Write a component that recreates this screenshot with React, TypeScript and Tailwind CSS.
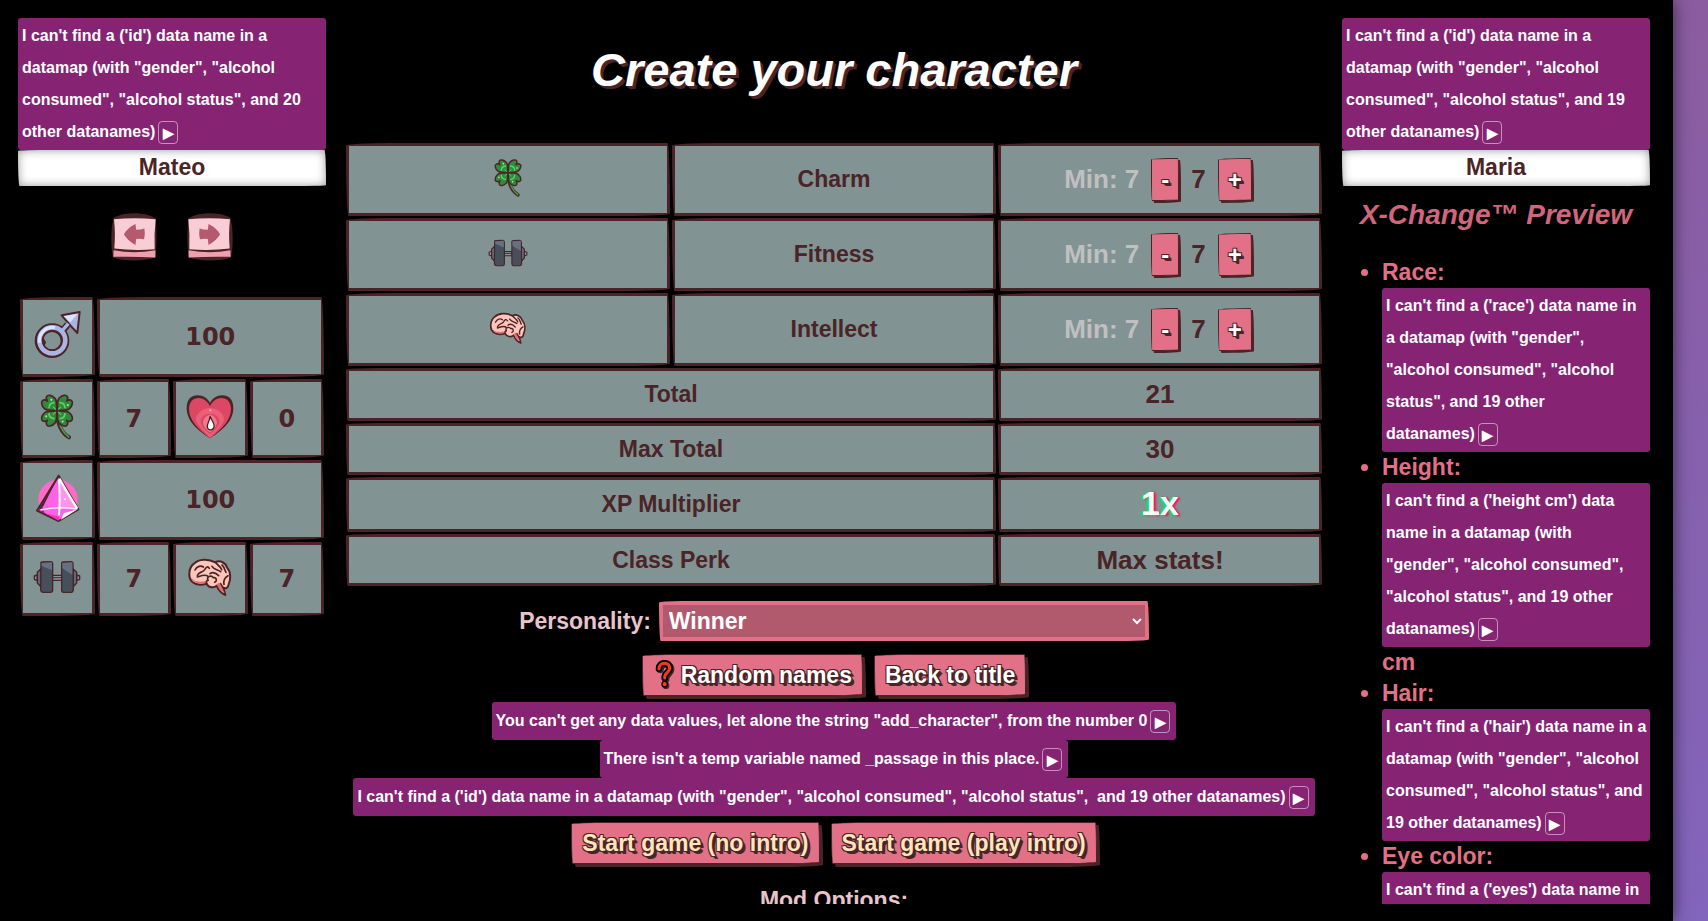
import React, { useState } from "react";

type StatName = "Charm" | "Fitness" | "Intellect";

const MIN_STAT = 7;
const MAX_TOTAL = 30;

// Uneven radii give the hand-drawn look of the frames
const cellStyle =
  "border-[3px] border-[#4a2426] bg-[#829394] p-0 text-center align-middle rounded-[70px_4px_70px_4px/4px_110px_4px_110px]";

const buttonStyle =
  "border border-[#4a2426] bg-[#e27086] font-bold [text-shadow:-1px_-1px_0_#4a2426,1px_-1px_0_#4a2426,-1px_1px_0_#4a2426,1px_1px_0_#4a2426,2px_2px_0_#4a2426,3px_3px_0_#4a2426] rounded-[70px_3px_70px_3px/4px_70px_4px_70px]";

const wideButtonStyle = `${buttonStyle} h-[42px] px-[10px] shadow-[3px_3px_0_#4a2426]`;

const stepButtonStyle = `${buttonStyle} h-[43px] text-2xl leading-none text-white shadow-[2px_2px_0_#4a2426]`;

interface IconProps {
  className?: string;
}

function MaleIcon({ className }: IconProps) {
  return (
    <svg viewBox="0 0 144 144" className={className} aria-hidden="true">
      <path d="M84 65 104 41" stroke="#4a2426" strokeWidth="20" />
      <path d="M86 13 140 3 133 66 118 50 104 34Z" fill="#a9b5e4" stroke="#4a2426" strokeWidth="6" strokeLinejoin="round" />
      <circle cx="57" cy="89" r="39" fill="none" stroke="#4a2426" strokeWidth="26" />
      <circle cx="58" cy="88" r="39" fill="none" stroke="#a9b5e4" strokeWidth="14" />
      <path d="M20 95A39 39 0 0 1 66 50" fill="none" stroke="#dde3fa" strokeWidth="9" />
      <path d="M83 64 106 38" stroke="#a9b5e4" strokeWidth="10" />
      <path d="M92 16 134 8 112 34Z" fill="#dde3fa" />
      <path d="M30 78 27 95 34 108 39 94Z" fill="#4a2426" />
    </svg>
  );
}

function CloverIcon({ className }: IconProps) {
  return (
    <svg viewBox="0 0 144 144" className={className} aria-hidden="true">
      <path d="M72 58C74 90 82 118 108 133" fill="none" stroke="#4a2426" strokeWidth="12" strokeLinecap="round" />
      <path d="M73 58C76 92 86 116 107 132" fill="none" stroke="#43a047" strokeWidth="5" strokeLinecap="round" />
      {[45, 135, 225, 315].map((angle) => (
        <g key={angle} transform={`translate(72 53) rotate(${angle})`}>
          <path
            d="M0 0C-5-10-22-18-22-32C-23-44-14-54-9-52C-4-51-1-47 0-41C1-47 4-51 9-52C14-54 23-44 22-32C22-18 5-10 0 0Z"
            fill="#2f8a3c"
            stroke="#4a2426"
            strokeWidth="5"
            strokeLinejoin="round"
          />
          <path d="M-12-22Q0-34 12-22" fill="none" stroke="#5fd068" strokeWidth="5" />
          <path d="M0-5V-17" stroke="#5fd068" strokeWidth="3" />
          <circle cx="11" cy="-35" r="3" fill="#a4efa4" />
        </g>
      ))}
    </svg>
  );
}

function HeartIcon({ className }: IconProps) {
  return (
    <svg viewBox="0 0 144 144" className={className} aria-hidden="true">
      <path
        d="M72 136C38 114 2 86 2 46C2 18 16 7 35 7C52 7 66 17 72 30C78 17 92 7 109 7C128 7 142 18 142 46C142 86 106 114 72 136Z"
        fill="#4a2426"
      />
      <path
        d="M72 136C42 112 9 84 9 49C9 26 22 15 38 15C54 15 67 28 72 40C77 28 90 15 106 15C122 15 135 26 135 49C135 84 102 112 72 136Z"
        fill="#dc4864"
      />
      <path d="M72 44C48 48 29 62 30 80C31 92 50 112 72 133C94 112 113 92 114 80C115 62 96 48 72 44Z" fill="#ec5f78" />
      <path d="M72 62C56 62 44 72 44 84C44 98 56 110 72 124C88 110 100 98 100 84C100 72 88 62 72 62Z" fill="#dc4864" />
      <path d="M72 66C60 68 51 78 51 90C53 102 62 111 72 118C82 111 91 102 93 90C93 78 84 68 72 66Z" fill="#f2788c" />
      <path d="M72 70C76 82 87 90 84 103C80 114 66 113 64 102C62 92 72 86 72 70Z" fill="#fff" stroke="#4a2426" strokeWidth="4" />
      <circle cx="73" cy="52" r="3" fill="#ffb3bf" />
    </svg>
  );
}

function CrystalIcon({ className }: IconProps) {
  return (
    <svg viewBox="0 0 144 144" className={className} aria-hidden="true">
      <circle cx="75" cy="76" r="59" fill="#ff69c8" />
      <path d="M77 5 12 110 77 141 136 106Z" fill="#fb62e6" stroke="#4a2426" strokeWidth="6" strokeLinejoin="round" />
      <path d="M75 10 16 109 28 102Z" fill="#4a2426" />
      <path d="M15 109 28 102 36 119Z" fill="#b5108c" />
      <path d="M78 16 80 104 128 103Z" fill="#ff93ee" />
      <path d="M36 118 79 128 77 140Z" fill="#ff2fb8" />
      <path d="M22 108Q76 96 133 105" fill="none" stroke="#ffe6fb" strokeWidth="5" />
      <path d="M78 18Q82 76 78 124" fill="none" stroke="#fff" strokeWidth="6" />
      <path d="M79 14Q112 72 133 104" fill="none" stroke="#fff" strokeWidth="7" />
      <path d="M92 118 134 106 84 137Z" fill="#fff" />
      <circle cx="96" cy="76" r="3" fill="#fff" />
    </svg>
  );
}

function DumbbellIcon({ className }: IconProps) {
  return (
    <svg viewBox="0 0 144 144" className={className} aria-hidden="true">
      <g stroke="#4a2426" strokeWidth="4" strokeLinejoin="round">
        <rect x="58" y="67" width="28" height="15" fill="#8c93a5" />
        <path d="M58 74H86" strokeWidth="3" />
        <path d="M13 66 4 69V79L13 83ZM131 66 140 69V79L131 83Z" fill="#8c93a5" />
        <path d="M24 47 13 58V90L24 102ZM120 47 131 58V90L120 102Z" fill="#5d687c" />
        <path d="M24 31Q22 28 28 27L53 26Q59 26 59 33V111Q59 118 52 118H31Q24 118 23 111Z" fill="#474f5a" />
        <path d="M86 31Q86 27 91 27L114 26Q120 26 120 33L121 111Q120 118 114 118H92Q86 118 86 111Z" fill="#474f5a" />
      </g>
      <path d="M26 30 57 28V52L26 39ZM88 30 118 28V65L88 46Z" fill="#667083" />
    </svg>
  );
}

function BrainIcon({ className }: IconProps) {
  return (
    <svg viewBox="0 0 144 144" className={className} aria-hidden="true">
      <path
        d="M20 88C4 74 8 44 24 32C38 18 66 16 88 28C102 20 120 30 123 44C136 58 134 80 128 94C126 106 118 108 112 104L118 126C102 120 96 108 92 98C84 106 66 104 62 92C48 96 30 96 20 88Z"
        fill="#ffc4ba"
        stroke="#4a2426"
        strokeWidth="6"
        strokeLinejoin="round"
      />
      <path d="M12 60C13 80 27 91 62 84L65 94C84 106 92 92 100 89L116 121C100 114 98 104 92 94C84 101 70 101 63 90C40 94 13 92 12 60Z" fill="#e96a6c" />
      <g fill="none" stroke="#4a2426" strokeWidth="5" strokeLinecap="round">
        <path d="M27 51C32 39 46 37 52 42" />
        <path d="M34 68C38 55 50 60 56 50C61 41 66 39 70 46" />
        <path d="M34 72C46 68 58 62 66 70" />
        <path d="M78 40C84 50 96 50 104 56M88 28C94 36 104 40 107 50" />
        <path d="M72 62C82 54 92 62 98 68" />
        <path d="M66 82C60 70 76 66 82 74C92 72 94 84 86 88" />
        <path d="M126 68C116 74 112 84 114 94M108 36C116 42 116 52 120 58" />
        <path d="M104 92 112 106M62 92C60 86 62 82 66 82" />
      </g>
    </svg>
  );
}

function ArrowIcon({ className }: IconProps) {
  return (
    <svg viewBox="0 0 139 144" className={className} aria-hidden="true">
      <path d="M8 14C40-4 100-4 132 14C138 20 140 90 134 134C100 146 40 146 6 134C-2 100 0 40 8 14Z" fill="#4a2426" />
      <path d="M9 18Q70 12 135 18Q130 60 132 109Q70 114 10 107Q14 60 9 18Z" fill="#f9cdd5" />
      <path d="M8 112Q70 124 134 112V134Q70 130 7 132Z" fill="#f09fae" />
      <path d="M39 64Q50 44 74 33L76 50Q90 50 101 46Q104 62 100 79Q88 76 76 78L74 96Q50 84 39 64Z" fill="#b4596e" />
    </svg>
  );
}

function QuestionIcon({ className }: IconProps) {
  return (
    <svg viewBox="0 0 60 90" className={className} aria-hidden="true">
      <g fill="none" strokeLinecap="round" strokeLinejoin="round">
        <path d="M16 30C16 8 50 8 48 30C47 42 32 42 33 58M33 76V77" stroke="#4a2426" strokeWidth="20" />
        <path d="M12 26C12 4 46 4 44 26C43 38 28 38 29 54M29 72V73" stroke="#000" strokeWidth="20" />
        <path d="M12 26C12 4 46 4 44 26C43 38 28 38 29 54" stroke="#fb3a17" strokeWidth="9" />
        <path d="M29 72V73" stroke="#fb3a17" strokeWidth="12" />
      </g>
    </svg>
  );
}

function ErrorBox({ message, inline = false }: { message: string; inline?: boolean }) {
  // The last word stays on one line with the button
  const cut = message.lastIndexOf(" ") + 1;

  return (
    <div
      className={`rounded-[3px] bg-[#862373] text-left text-base font-bold leading-8 text-white ${
        inline ? "w-fit max-w-full py-[3px] pl-1 pr-[6px]" : "py-0.5 pl-1 pr-0.5"
      }`}
    >
      {message.slice(0, cut)}
      <span className="whitespace-nowrap">
        {message.slice(cut)}
        <button
          type="button"
          aria-label="Show details"
          className="ml-[3px] inline-flex h-[23px] w-5 items-center justify-center rounded border border-white/50 align-middle text-sm leading-none"
        >
          ▶
        </button>
      </span>
    </div>
  );
}

function NameInput({ label, defaultValue }: { label: string; defaultValue: string }) {
  return (
    <input
      type="text"
      aria-label={label}
      defaultValue={defaultValue}
      className="h-9 w-full bg-white pb-px text-center text-[23px] font-bold text-[#4a2426] outline-none rounded-[70px_3px_70px_3px/2px_70px_2px_70px] shadow-[inset_0_0_10px_rgba(0,0,0,0.4)]"
    />
  );
}

const statRows: { name: StatName; Icon: React.ComponentType<IconProps> }[] = [
  { name: "Charm", Icon: CloverIcon },
  { name: "Fitness", Icon: DumbbellIcon },
  { name: "Intellect", Icon: BrainIcon },
];

export default function App() {
  const [stats, setStats] = useState<Record<StatName, number>>({ Charm: 7, Fitness: 7, Intellect: 7 });
  const total = stats.Charm + stats.Fitness + stats.Intellect;

  const changeStat = (name: StatName, delta: number) => {
    if (stats[name] + delta < MIN_STAT || total + delta > MAX_TOTAL) return;
    setStats({ ...stats, [name]: stats[name] + delta });
  };

  const numberCell = `${cellStyle} text-2xl leading-none font-bold font-['DejaVu_Sans',sans-serif]`;
  const iconStyle = "mx-auto mb-1 block size-12";

  return (
    <div className="flex h-screen overflow-hidden bg-linear-to-b from-[#8b5c9f] to-[#8265bc] font-['Liberation_Sans',Arial,sans-serif]">
      <div className="mr-[35px] flex-1 bg-black pt-[18px] pr-[23px] pb-[17px] pl-[18px] shadow-[0_0_16px_rgba(0,0,0,0.6)]">
        <div className="grid h-full grid-cols-[11fr_35fr_11fr] gap-[18px] overflow-hidden">
          {/* Current character */}
          <aside>
            <ErrorBox message={`I can't find a ('id') data name in a datamap (with "gender", "alcohol consumed", "alcohol status", and 20 other datanames)`} />
            <NameInput label="Male name" defaultValue="Mateo" />

            <div className="mt-[27px] mb-[34px] flex justify-center gap-[30px]">
              <button type="button" aria-label="Previous">
                <ArrowIcon className="h-12 w-[46px]" />
              </button>
              <button type="button" aria-label="Next">
                <ArrowIcon className="h-12 w-[46px] -scale-x-100" />
              </button>
            </div>

            <table className="w-full table-fixed border-separate border-spacing-[2px] text-[#4a2426]">
              <tbody>
                <tr className="h-20">
                  <td className={cellStyle}><MaleIcon className={iconStyle} /></td>
                  <td className={numberCell} colSpan={3}>100</td>
                </tr>
                <tr className="h-[79px]">
                  <td className={cellStyle}><CloverIcon className={iconStyle} /></td>
                  <td className={numberCell}>{stats.Charm}</td>
                  <td className={cellStyle}><HeartIcon className={iconStyle} /></td>
                  <td className={numberCell}>0</td>
                </tr>
                <tr className="h-20">
                  <td className={cellStyle}><CrystalIcon className={iconStyle} /></td>
                  <td className={numberCell} colSpan={3}>100</td>
                </tr>
                <tr className="h-[74px]">
                  <td className={cellStyle}><DumbbellIcon className={iconStyle} /></td>
                  <td className={numberCell}>{stats.Fitness}</td>
                  <td className={cellStyle}><BrainIcon className={iconStyle} /></td>
                  <td className={numberCell}>{stats.Intellect}</td>
                </tr>
              </tbody>
            </table>
          </aside>

          {/* Character creation */}
          <main className="flex flex-col items-center">
            <h1 className="mt-[15px] mb-[34px] text-[47px] leading-[74px] font-bold text-white italic [text-shadow:1px_1px_0_#4a2426,2px_2px_0_#4a2426,3px_3px_0_#4a2426]">
              Create your character
            </h1>

            <table className="w-full table-fixed border-separate border-spacing-[2px] text-[23px] font-bold text-[#4a2426]">
              <tbody>
                {statRows.map(({ name, Icon }) => (
                  <tr key={name} className="h-[73px]">
                    <td className={cellStyle}><Icon className="mx-auto mb-1 block size-10" /></td>
                    <td className={cellStyle}>{name}</td>
                    <td className={cellStyle}>
                      <div className="flex items-center justify-center pr-1 text-[26px]">
                        <span className="text-[#c0c0c0]">Min: {MIN_STAT}</span>
                        <button
                          type="button"
                          aria-label={`Decrease ${name}`}
                          onClick={() => changeStat(name, -1)}
                          className={`${stepButtonStyle} mx-3 w-7`}
                        >
                          -
                        </button>
                        <span>{stats[name]}</span>
                        <button
                          type="button"
                          aria-label={`Increase ${name}`}
                          onClick={() => changeStat(name, 1)}
                          className={`${stepButtonStyle} ml-3 w-[34px]`}
                        >
                          +
                        </button>
                      </div>
                    </td>
                  </tr>
                ))}
                <tr className="h-[53px]">
                  <td className={cellStyle} colSpan={2}>Total</td>
                  <td className={`${cellStyle} text-[26px]`}>{total}</td>
                </tr>
                <tr className="h-[52px]">
                  <td className={cellStyle} colSpan={2}>Max Total</td>
                  <td className={`${cellStyle} text-[26px]`}>{MAX_TOTAL}</td>
                </tr>
                <tr className="h-[55px]">
                  <td className={cellStyle} colSpan={2}>XP Multiplier</td>
                  <td className={`${cellStyle} pb-1 text-[34px] leading-none text-white [text-shadow:-2px_1px_2px_#0be35f,-1px_0_1px_#2fe070,2px_1px_2px_#ff0a5c,1px_0_1px_#ff0a5c]`}>
                    1x
                  </td>
                </tr>
                <tr className="h-[52px]">
                  <td className={cellStyle} colSpan={2}>Class Perk</td>
                  <td className={`${cellStyle} text-[26px]`}>Max stats!</td>
                </tr>
              </tbody>
            </table>

            <div className="mt-[13px] flex w-full items-center justify-center gap-2 text-[23px] font-bold">
              <label htmlFor="personality" className="text-[#e8c4cc]">Personality:</label>
              <select
                id="personality"
                defaultValue="Winner"
                className="h-10 w-1/2 border-4 border-[#e27086] bg-[#b15a6e] pl-0.5 text-white rounded-[40px_3px_40px_3px/3px_70px_3px_70px]"
              >
                <option>Winner</option>
                <option>Slacker</option>
              </select>
            </div>

            <div className="mt-[13px] flex justify-center gap-[11px] text-[23px] text-white">
              <button type="button" className={`${wideButtonStyle} flex items-center gap-1`}>
                <QuestionIcon className="h-[30px] w-6" />
                Random names
              </button>
              <button type="button" className={wideButtonStyle}>Back to title</button>
            </div>

            <div className="mt-[6px] flex flex-col items-center">
              <ErrorBox inline message={`You can't get any data values, let alone the string "add_character", from the number 0`} />
              <ErrorBox inline message="There isn't a temp variable named _passage in this place." />
              <ErrorBox
                inline
                message={`I can't find a ('id') data name in a datamap (with "gender", "alcohol consumed", "alcohol status", \u00a0and 19 other datanames)`}
              />
            </div>

            <div className="mt-[6px] flex justify-center gap-[11px] text-[23px] text-[#ffe4bd]">
              <button type="button" className={wideButtonStyle}>Start game (no intro)</button>
              <button type="button" className={wideButtonStyle}>Start game (play intro)</button>
            </div>

            <h2 className="mt-5 text-[23px] leading-8 font-bold text-[#e8c4cc]">Mod Options:</h2>
          </main>

          {/* Preview after the change */}
          <aside>
            <ErrorBox message={`I can't find a ('id') data name in a datamap (with "gender", "alcohol consumed", "alcohol status", and 19 other datanames)`} />
            <NameInput label="Female name" defaultValue="Maria" />
            <h2 className="mt-[9px] mb-[22px] text-center text-[28px] leading-10 font-bold whitespace-nowrap text-[#cf667c] italic">
              X-Change™ Preview
            </h2>
            <ul className="list-disc pl-10 text-[23px] leading-[31px] font-bold text-[#e27086]">
              <li>
                Race:
                <ErrorBox message={`I can't find a ('race') data name in a datamap (with "gender", "alcohol consumed", "alcohol status", and 19 other datanames)`} />
              </li>
              <li>
                Height:
                <ErrorBox message={`I can't find a ('height cm') data name in a datamap (with "gender", "alcohol consumed", "alcohol status", and 19 other datanames)`} />
                cm
              </li>
              <li>
                Hair:
                <ErrorBox message={`I can't find a ('hair') data name in a datamap (with "gender", "alcohol consumed", "alcohol status", and 19 other datanames)`} />
              </li>
              <li>
                Eye color:
                <ErrorBox message={`I can't find a ('eyes') data name in a datamap (with "gender", "alcohol consumed", "alcohol status", and 19 other datanames)`} />
              </li>
            </ul>
          </aside>
        </div>
      </div>
    </div>
  );
}
